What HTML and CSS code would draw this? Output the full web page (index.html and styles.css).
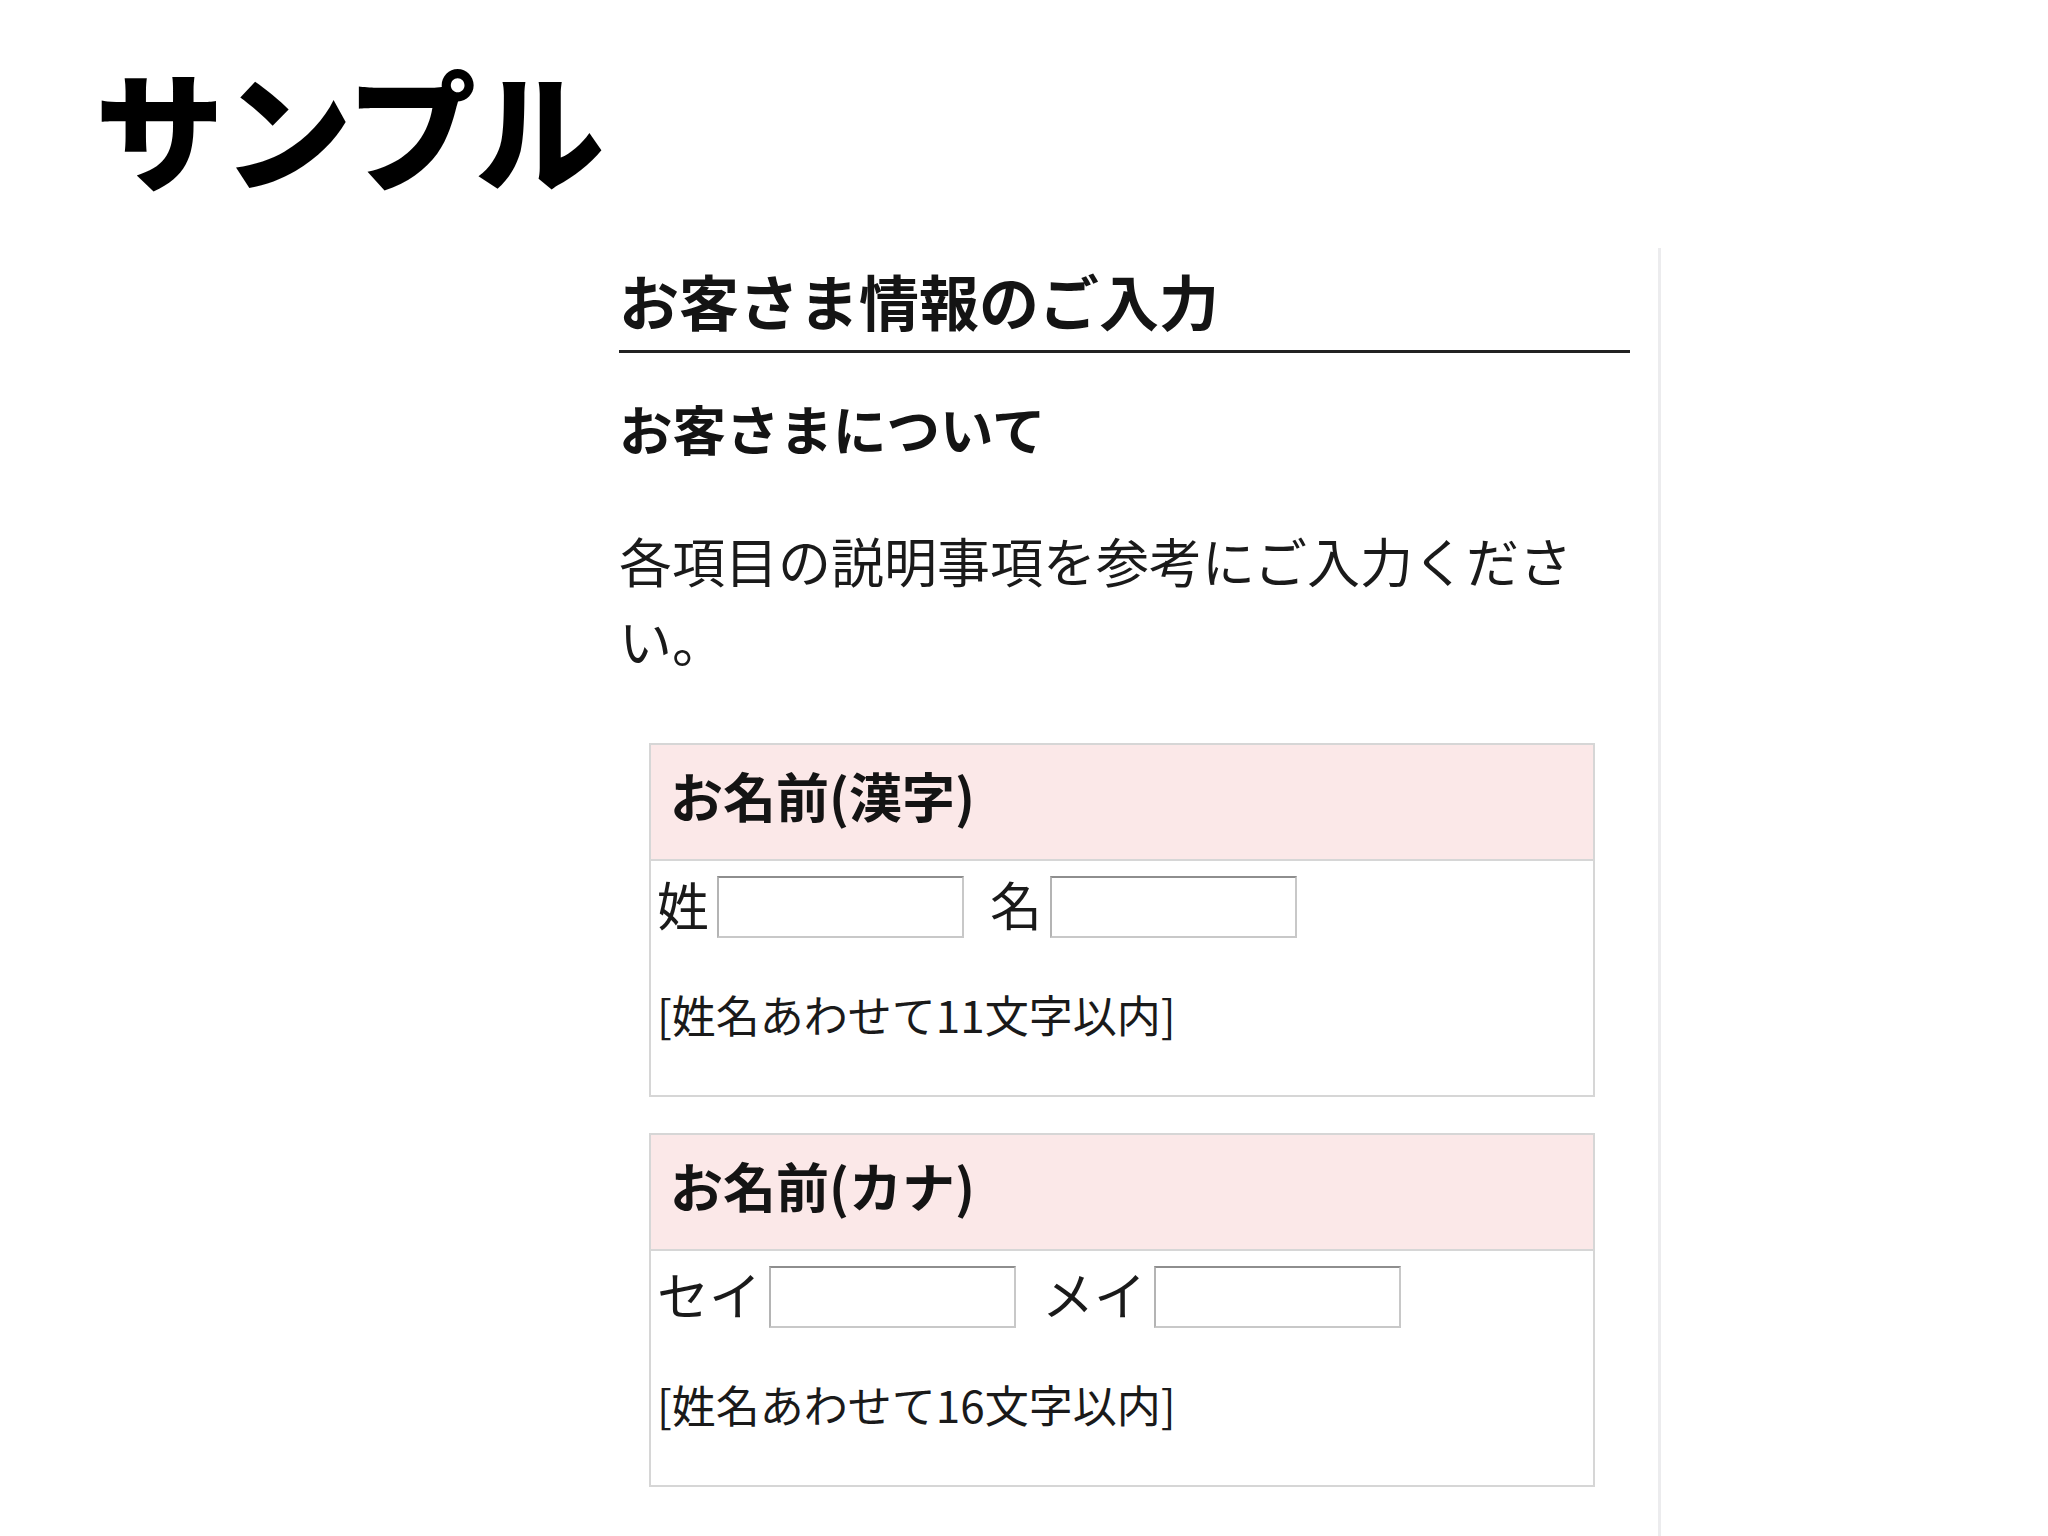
FILE: index.html
```html
<!DOCTYPE html>
<html lang="ja">
<head>
<meta charset="utf-8">
<title>サンプル</title>
<link rel="stylesheet" href="styles.css">
</head>
<body>
<h1 class="title">サンプル</h1>
<div class="panel">
  <h2 class="section-title">お客さま情報のご入力</h2>
  <h3 class="sub-title">お客さまについて</h3>
  <p class="lead">各項目の説明事項を参考にご入力ください。</p>

  <div class="field-box">
    <div class="field-head">お名前(漢字)</div>
    <div class="field-body">
      <div class="field-row">
        <span class="field-label">姓</span><input class="field-input" type="text">
        <span class="field-label">名</span><input class="field-input" type="text">
      </div>
      <div class="field-note">[姓名あわせて11文字以内]</div>
    </div>
  </div>

  <div class="field-box">
    <div class="field-head">お名前(カナ)</div>
    <div class="field-body">
      <div class="field-row">
        <span class="field-label">セイ</span><input class="field-input" type="text">
        <span class="field-label">メイ</span><input class="field-input" type="text">
      </div>
      <div class="field-note">[姓名あわせて16文字以内]</div>
    </div>
  </div>
</div>
</body>
</html>
```
FILE: styles.css
```css
html, body {
  margin: 0;
  padding: 0;
  background: #ffffff;
}
body {
  font-family: "Noto Sans CJK JP", "Noto Sans", sans-serif;
  color: #111111;
  min-height: 1536px;
}
.title {
  margin: 0 0 58px 0;
  padding: 62px 0 0 95px;
  font-size: 129px;
  line-height: 128px;
  font-weight: 900;
  color: #000;
  letter-spacing: -1px;
}
.panel {
  margin-left: 619px;
  width: 1011px;
  padding: 16px 28px 60px 0;
  border-right: 3px solid #ececee;
  min-height: 1228px;
  box-sizing: content-box;
}
.section-title {
  margin: 0;
  font-size: 60px;
  line-height: 72px;
  font-weight: 700;
  padding-bottom: 14px;
  border-bottom: 3px solid #222;
  color: #141414;
}
.sub-title {
  margin: 40px 0 0 0;
  font-size: 53.5px;
  line-height: 70px;
  font-weight: 700;
  color: #141414;
}
.lead {
  margin: 57px 0 0 0;
  font-size: 53px;
  line-height: 80px;
  font-weight: 400;
  color: #1a1a1a;
  width: 1000px;
}
.field-box {
  margin: 63px 35px 0 30px;
  border: 2px solid #d6d6d6;
}
.field-box + .field-box {
  margin-top: 36px;
}
.field-head {
  background: #fbe8e8;
  border-bottom: 2px solid #d6d6d6;
  padding: 14px 20px 27px 19px;
  font-size: 53px;
  line-height: 73px;
  font-weight: 700;
  color: #141414;
}
.field-body {
  padding: 15px 8px 51px 6px;
}
.field-row {
  display: flex;
  align-items: center;
}
.field-label {
  font-size: 52px;
  line-height: 62px;
  margin-right: 8px;
  margin-top: -6px;
  color: #1a1a1a;
}
.field-input {
  width: 247px;
  height: 62px;
  box-sizing: border-box;
  margin: 0 26px 0 0;
  padding: 0;
  border: 2px solid #c8c8c8;
  border-top-color: #8e8e8e;
  border-left-color: #b4b4b4;
  background: #fff;
}
.field-note {
  margin-top: 46px;
  font-size: 44px;
  line-height: 60px;
  color: #1a1a1a;
}
```
